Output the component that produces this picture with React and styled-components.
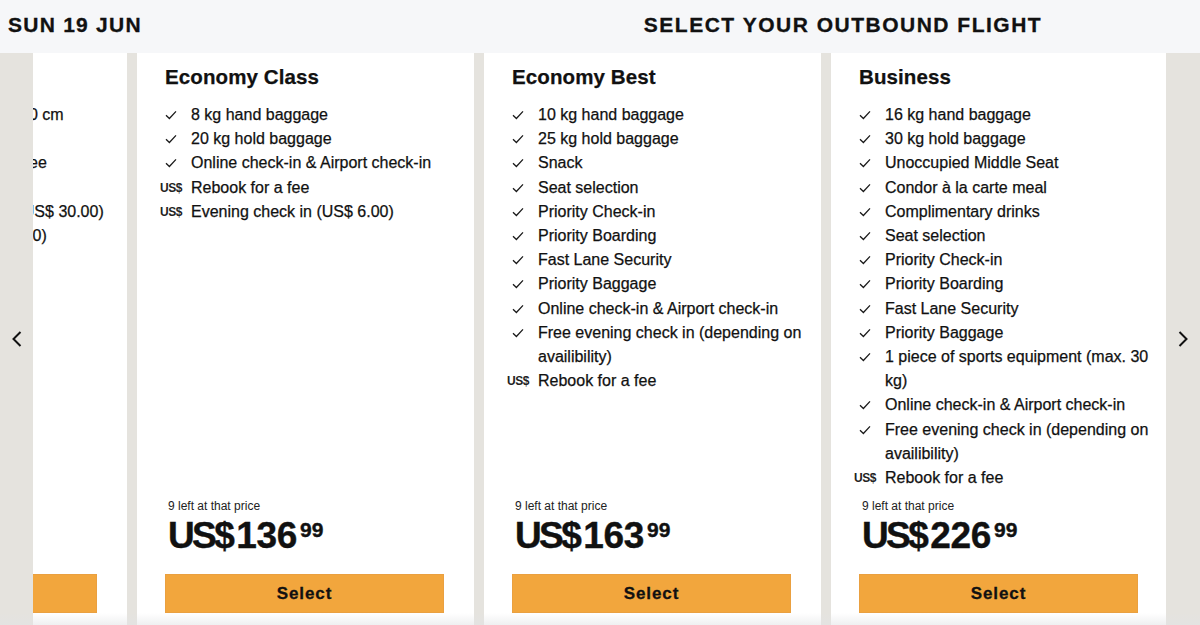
import React from "react";
import styled, { createGlobalStyle } from "styled-components";

const Global = createGlobalStyle`
  html, body { margin: 0; padding: 0; }
  body { font-family: "Liberation Sans", Arial, sans-serif; color: #111; background: #e5e3de; }
  * { box-sizing: border-box; }
`;

const Page = styled.div`
  width: 1200px;
  height: 625px;
  overflow: hidden;
  display: flex;
  flex-direction: column;
  position: relative;
`;

const Header = styled.header`
  height: 53px;
  flex: 0 0 53px;
  display: flex;
  background: #f6f7f9;
`;

const HeaderDate = styled.div`
  width: 482px;
  padding-left: 8px;
  display: flex;
  align-items: center;
  font-weight: 700;
  font-size: 21px;
  letter-spacing: 1.25px;
  padding-bottom: 4px;
  -webkit-text-stroke: 0.3px currentColor;
`;

const HeaderTitle = styled.h1`
  flex: 1;
  margin: 0;
  display: flex;
  align-items: center;
  justify-content: center;
  font-weight: 700;
  font-size: 21px;
  letter-spacing: 1.5px;
  padding-bottom: 4px;
  padding-left: 4px;
  -webkit-text-stroke: 0.3px currentColor;
`;

const Body = styled.main`
  flex: 1;
  display: flex;
  min-height: 0;
  position: relative;
`;

const Gutter = styled.button`
  flex: 0 0 ${(p) => p.$w}px;
  border: 0;
  padding: 0;
  background: #e5e3de;
  display: flex;
  align-items: center;
  justify-content: center;
  cursor: pointer;
`;

const Viewport = styled.div`
  flex: 1;
  overflow: hidden;
  display: flex;
`;

const Track = styled.div`
  display: flex;
  gap: 10px;
  transform: translateX(-243px);
`;

const Card = styled.section`
  flex: 0 0 337px;
  background: #fff;
  display: flex;
  flex-direction: column;
  padding: 12px 30px 12px 28px;
`;

const Title = styled.h2`
  margin: 0;
  font-size: 20.5px;
  line-height: 24px;
  font-weight: 700;
  letter-spacing: 0.1px;
  -webkit-text-stroke: 0.25px currentColor;
`;

const List = styled.ul`
  list-style: none;
  margin: 14px -16px 0 -10px;
  padding: 0;
`;

const Item = styled.li`
  display: grid;
  grid-template-columns: 32px 1fr;
  column-gap: 4px;
  font-size: 16px;
  line-height: 24.2px;
  color: #111;
  -webkit-text-stroke: 0.25px currentColor;
`;

const IconCell = styled.span`
  height: 24px;
  display: flex;
  align-items: center;
  justify-content: center;
`;

const Fee = styled.span`
  font-size: 12px;
  font-weight: 700;
  letter-spacing: -0.4px;
  color: #222;
  -webkit-text-stroke: 0;
`;

const Spacer = styled.div`
  flex: 1;
`;

const PriceBlock = styled.div`
  padding-left: 3px;
`;

const Left = styled.div`
  font-size: 12px;
  line-height: 16px;
  color: #222;
`;

const PriceRow = styled.div`
  display: flex;
  align-items: flex-start;
  margin-top: 2px;
  height: 44px;
  font-weight: 700;
  color: #111;
  -webkit-text-stroke: 0.4px currentColor;
`;

const Currency = styled.span`
  font-size: 37px;
  line-height: 40px;
  letter-spacing: -2.6px;
  margin-right: 4px;
`;

const Amount = styled.span`
  font-size: 37px;
  line-height: 40px;
  letter-spacing: -0.3px;
`;

const Cents = styled.span`
  font-size: 21px;
  line-height: 22px;
  margin-left: 3px;
  margin-top: 3px;
`;

const SelectButton = styled.button`
  margin-top: 14px;
  height: 39px;
  width: 100%;
  border: 1px solid #eaa040;
  background: #f2a63d;
  color: #111;
  font-family: "Liberation Sans", Arial, sans-serif;
  font-weight: 700;
  font-size: 17px;
  letter-spacing: 0.9px;
  cursor: pointer;
  -webkit-text-stroke: 0.3px currentColor;
`;

const Fade = styled.div`
  position: absolute;
  left: 0;
  right: 0;
  bottom: 0;
  height: 12px;
  pointer-events: none;
  background: linear-gradient(to bottom, rgba(232, 232, 234, 0), rgba(226, 227, 229, 0.55));
`;

const Check = () => (
  <svg width="12" height="10" viewBox="0 0 12 10" aria-hidden="true">
    <polyline points="1,5.2 4.4,8.5 11,1.4" fill="none" stroke="#1a1a1a" strokeWidth="1.3" />
  </svg>
);

const Chevron = ({ dir }) => (
  <svg width="12" height="18" viewBox="0 0 12 18" aria-hidden="true">
    <polyline
      points={dir === "left" ? "9.5,2 2.5,9 9.5,16" : "2.5,2 9.5,9 2.5,16"}
      fill="none"
      stroke="#111"
      strokeWidth="2"
    />
  </svg>
);

const cards = [
  {
    title: "Economy Light",
    price: "99",
    items: [
      ["c", "Personal item: 40 x 30 x 10 cm"],
      ["c", "No hold baggage"],
      ["f", "Rebooking possible for a fee"],
      ["f", "Seat selection"],
      ["f", "Hold baggage bookable (US$ 30.00)"],
      ["f", "Evening check in (US$ 6.00)"],
    ],
  },
  {
    title: "Economy Class",
    price: "136",
    items: [
      ["c", "8 kg hand baggage"],
      ["c", "20 kg hold baggage"],
      ["c", "Online check-in & Airport check-in"],
      ["f", "Rebook for a fee"],
      ["f", "Evening check in (US$ 6.00)"],
    ],
  },
  {
    title: "Economy Best",
    price: "163",
    items: [
      ["c", "10 kg hand baggage"],
      ["c", "25 kg hold baggage"],
      ["c", "Snack"],
      ["c", "Seat selection"],
      ["c", "Priority Check-in"],
      ["c", "Priority Boarding"],
      ["c", "Fast Lane Security"],
      ["c", "Priority Baggage"],
      ["c", "Online check-in & Airport check-in"],
      ["c", "Free evening check in (depending on availibility)"],
      ["f", "Rebook for a fee"],
    ],
  },
  {
    title: "Business",
    price: "226",
    items: [
      ["c", "16 kg hand baggage"],
      ["c", "30 kg hold baggage"],
      ["c", "Unoccupied Middle Seat"],
      ["c", "Condor à la carte meal"],
      ["c", "Complimentary drinks"],
      ["c", "Seat selection"],
      ["c", "Priority Check-in"],
      ["c", "Priority Boarding"],
      ["c", "Fast Lane Security"],
      ["c", "Priority Baggage"],
      ["c", "1 piece of sports equipment (max. 30 kg)"],
      ["c", "Online check-in & Airport check-in"],
      ["c", "Free evening check in (depending on availibility)"],
      ["f", "Rebook for a fee"],
    ],
  },
];

export default function App() {
  return (
    <Page>
      <Global />
      <Header>
        <HeaderDate>SUN 19 JUN</HeaderDate>
        <HeaderTitle>SELECT YOUR OUTBOUND FLIGHT</HeaderTitle>
      </Header>
      <Body>
        <Gutter $w={33} aria-label="Previous">
          <Chevron dir="left" />
        </Gutter>
        <Viewport>
          <Track>
            {cards.map((card) => (
              <Card key={card.title}>
                <Title>{card.title}</Title>
                <List>
                  {card.items.map(([kind, text]) => (
                    <Item key={text}>
                      <IconCell>{kind === "c" ? <Check /> : <Fee>US$</Fee>}</IconCell>
                      <span>{text}</span>
                    </Item>
                  ))}
                </List>
                <Spacer />
                <PriceBlock>
                  <Left>9 left at that price</Left>
                  <PriceRow>
                    <Currency>US$</Currency>
                    <Amount>{card.price}</Amount>
                    <Cents>99</Cents>
                  </PriceRow>
                </PriceBlock>
                <SelectButton>Select</SelectButton>
              </Card>
            ))}
          </Track>
        </Viewport>
        <Gutter $w={34} aria-label="Next">
          <Chevron dir="right" />
        </Gutter>
        <Fade />
      </Body>
    </Page>
  );
}
